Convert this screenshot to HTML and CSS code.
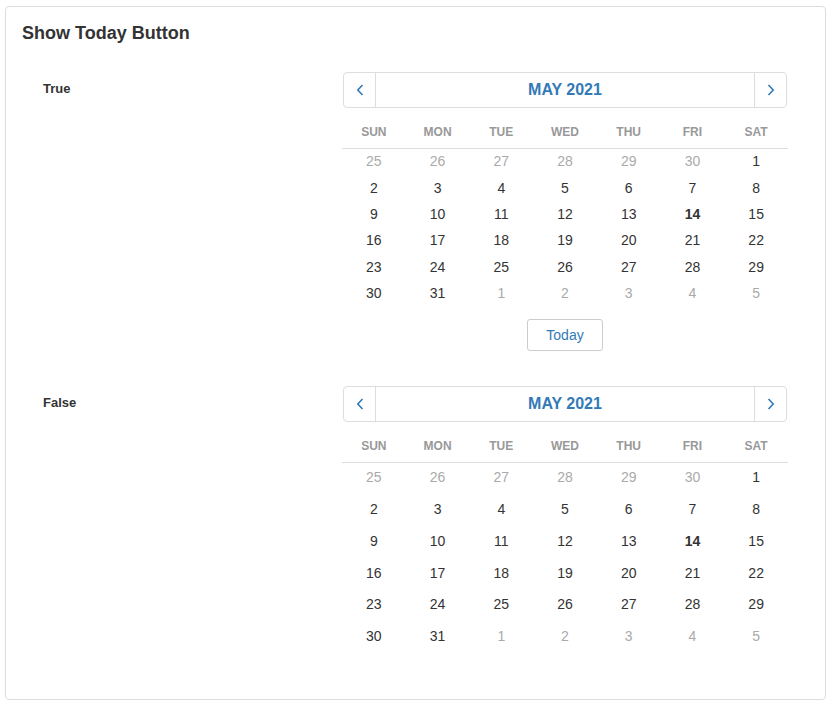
FILE: index.html
```html
<!DOCTYPE html>
<html>
<head>
<meta charset="utf-8">
<link rel="stylesheet" href="styles.css">
</head>
<body>
<div class="card">
  <h3 class="title">Show Today Button</h3>

  <div class="row">
    <div class="label">True</div>
    <div class="cal">
      <div class="cal-head">
        <button class="nav"><svg width="8" height="12" viewBox="0 0 8 12"><path d="M6.5 1 L1.8 6 L6.5 11" fill="none" stroke="#337ab7" stroke-width="1.6"/></svg></button>
        <div class="month">MAY 2021</div>
        <button class="nav"><svg width="8" height="12" viewBox="0 0 8 12"><path d="M1.5 1 L6.2 6 L1.5 11" fill="none" stroke="#337ab7" stroke-width="1.6"/></svg></button>
      </div>
      <div class="weekdays"><span>SUN</span><span>MON</span><span>TUE</span><span>WED</span><span>THU</span><span>FRI</span><span>SAT</span></div>
      <div class="days short">
        <span class="muted">25</span><span class="muted">26</span><span class="muted">27</span><span class="muted">28</span><span class="muted">29</span><span class="muted">30</span><span>1</span>
        <span>2</span><span>3</span><span>4</span><span>5</span><span>6</span><span>7</span><span>8</span>
        <span>9</span><span>10</span><span>11</span><span>12</span><span>13</span><span class="today">14</span><span>15</span>
        <span>16</span><span>17</span><span>18</span><span>19</span><span>20</span><span>21</span><span>22</span>
        <span>23</span><span>24</span><span>25</span><span>26</span><span>27</span><span>28</span><span>29</span>
        <span>30</span><span>31</span><span class="muted">1</span><span class="muted">2</span><span class="muted">3</span><span class="muted">4</span><span class="muted">5</span>
      </div>
      <div class="today-wrap"><button class="today-btn">Today</button></div>
    </div>
  </div>

  <div class="row">
    <div class="label">False</div>
    <div class="cal">
      <div class="cal-head">
        <button class="nav"><svg width="8" height="12" viewBox="0 0 8 12"><path d="M6.5 1 L1.8 6 L6.5 11" fill="none" stroke="#337ab7" stroke-width="1.6"/></svg></button>
        <div class="month">MAY 2021</div>
        <button class="nav"><svg width="8" height="12" viewBox="0 0 8 12"><path d="M1.5 1 L6.2 6 L1.5 11" fill="none" stroke="#337ab7" stroke-width="1.6"/></svg></button>
      </div>
      <div class="weekdays"><span>SUN</span><span>MON</span><span>TUE</span><span>WED</span><span>THU</span><span>FRI</span><span>SAT</span></div>
      <div class="days tall">
        <span class="muted">25</span><span class="muted">26</span><span class="muted">27</span><span class="muted">28</span><span class="muted">29</span><span class="muted">30</span><span>1</span>
        <span>2</span><span>3</span><span>4</span><span>5</span><span>6</span><span>7</span><span>8</span>
        <span>9</span><span>10</span><span>11</span><span>12</span><span>13</span><span class="today">14</span><span>15</span>
        <span>16</span><span>17</span><span>18</span><span>19</span><span>20</span><span>21</span><span>22</span>
        <span>23</span><span>24</span><span>25</span><span>26</span><span>27</span><span>28</span><span>29</span>
        <span>30</span><span>31</span><span class="muted">1</span><span class="muted">2</span><span class="muted">3</span><span class="muted">4</span><span class="muted">5</span>
      </div>
    </div>
  </div>
</div>
</body>
</html>
```

FILE: styles.css
```css
* { box-sizing: border-box; }
html, body { margin: 0; padding: 0; background: #fff; }
body {
  font-family: "Liberation Sans", Arial, sans-serif;
  color: #333;
}
.card {
  margin: 6px 0 0 5px;
  width: 821px;
  height: 694px;
  border: 1px solid #ddd;
  border-radius: 4px;
  padding: 16px 16px 0 16px;
}
.title {
  margin: 0 0 29px 0;
  font-size: 18px;
  line-height: 20px;
  font-weight: bold;
  color: #333;
}
.row {
  display: flex;
  padding-left: 21px;
  margin-bottom: 35px;
}
.label {
  width: 299px;
  padding-top: 9px;
  font-size: 13px;
  line-height: 16px;
  font-weight: bold;
  color: #333;
}
.cal {
  width: 446px;
}
.cal-head {
  margin: 0 1px;
  height: 36px;
  display: flex;
  border: 1px solid #ddd;
  border-radius: 4px;
}
.nav {
  width: 32px;
  flex: 0 0 32px;
  border: 0;
  background: transparent;
  padding: 0;
  display: flex;
  align-items: center;
  justify-content: center;
}
.nav:first-child { border-right: 1px solid #ddd; }
.nav:last-child { border-left: 1px solid #ddd; }
.month {
  flex: 1;
  text-align: center;
  font-size: 16px;
  font-weight: bold;
  line-height: 33px;
  color: #337ab7;
}
.weekdays {
  display: grid;
  grid-template-columns: repeat(7, 1fr);
  margin-top: 7px;
  height: 34px;
  border-bottom: 1px solid #ddd;
  align-items: center;
  text-align: center;
  font-size: 12px;
  font-weight: bold;
  color: #999;
}
.days {
  display: grid;
  grid-template-columns: repeat(7, 1fr);
  text-align: center;
  font-size: 14px;
  color: #333;
}
.days span { display: flex; align-items: center; justify-content: center; }
.days.short { grid-auto-rows: 26.4px; margin-top: -1px; }
.days.tall { grid-auto-rows: 31.8px; margin-top: -2px; }
.days .muted { color: #aaa; }
.days .today { font-weight: bold; }
.today-wrap {
  display: flex;
  justify-content: center;
  margin-top: 13px;
}
.today-btn {
  width: 76px;
  height: 32px;
  border: 1px solid #ccc;
  border-radius: 3px;
  background: #fff;
  font-family: "Liberation Sans", Arial, sans-serif;
  font-size: 14px;
  color: #337ab7;
}
```
